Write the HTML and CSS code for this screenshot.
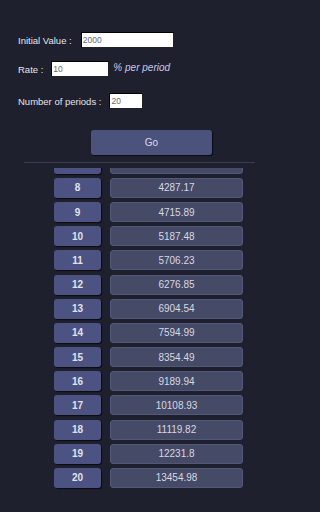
FILE: index.html
```html
<!DOCTYPE html>
<html>
<head>
<meta charset="utf-8">
<link rel="stylesheet" href="styles.css">
</head>
<body>
<div class="form">
  <div class="field f1"><label>Initial Value :</label><input class="in in1" value="2000"></div>
  <div class="field f2"><label>Rate :</label><input class="in in2" value="10"><span class="unit">% per period</span></div>
  <div class="field f3"><label>Number of periods :</label><input class="in in3" value="20"></div>
  <button class="go">Go</button>
</div>
<div class="rule"></div>
<div class="scroller">
  <div class="list">
    <div class="row"><div class="num">7</div><div class="val">3897.43</div></div>
    <div class="row"><div class="num">8</div><div class="val">4287.17</div></div>
    <div class="row"><div class="num">9</div><div class="val">4715.89</div></div>
    <div class="row"><div class="num">10</div><div class="val">5187.48</div></div>
    <div class="row"><div class="num">11</div><div class="val">5706.23</div></div>
    <div class="row"><div class="num">12</div><div class="val">6276.85</div></div>
    <div class="row"><div class="num">13</div><div class="val">6904.54</div></div>
    <div class="row"><div class="num">14</div><div class="val">7594.99</div></div>
    <div class="row"><div class="num">15</div><div class="val">8354.49</div></div>
    <div class="row"><div class="num">16</div><div class="val">9189.94</div></div>
    <div class="row"><div class="num">17</div><div class="val">10108.93</div></div>
    <div class="row"><div class="num">18</div><div class="val">11119.82</div></div>
    <div class="row"><div class="num">19</div><div class="val">12231.8</div></div>
    <div class="row"><div class="num">20</div><div class="val">13454.98</div></div>
  </div>
</div>
</body>
</html>
```
FILE: styles.css
```css
html, body {
  margin: 0;
  padding: 0;
  background: #1f202d;
  height: 512px;
  overflow: hidden;
  font-family: "Liberation Sans", Arial, sans-serif;
}
.form {
  padding: 32px 0 0 18px;
  display: flex;
  flex-direction: column;
}
.field {
  display: flex;
  align-items: center;
  height: 16px;
  color: #e4e4e8;
  font-size: 9.5px;
}
.field label {
  margin-right: 9px;
  white-space: nowrap;
}
.f2 { margin-top: 13px; }
.f3 { margin-top: 16px; }
.in {
  box-sizing: border-box;
  height: 16px;
  background: #fff;
  border: 1px solid #222;
  border-top-color: #000;
  border-left-color: #000;
  padding: 0 1px;
  font-family: "Liberation Sans", Arial, sans-serif;
  font-size: 8.5px;
  color: #6a6a6a;
  outline: none;
}
.in1 { width: 93px; }
.in2 { width: 58px; margin-left: -1px; }
.in3 { width: 34px; margin-left: -1px; }
.unit {
  font-style: italic;
  font-size: 10px;
  color: #c9c9f2;
  margin-left: 4px;
  margin-top: -3px;
  white-space: nowrap;
}
.go {
  margin: 21px 0 0 73px;
  width: 121px;
  height: 25px;
  border: none;
  border-radius: 3px;
  background: #4b527c;
  color: #dcdce4;
  font-family: "Liberation Sans", Arial, sans-serif;
  font-size: 10px;
  box-shadow: 1px 1px 1px #0c0c14;
  padding: 0;
}
.rule {
  margin: 7px 0 0 24px;
  width: 231px;
  height: 1px;
  background: #3a3b4b;
}
.scroller {
  margin-top: 5px;
  height: 344px;
  overflow: hidden;
}
.list {
  margin-top: -14.2px;
  padding-left: 54px;
  display: flex;
  flex-direction: column;
  gap: 4.17px;
}
.row {
  display: flex;
  height: 20px;
}
.num {
  box-sizing: border-box;
  width: 47px;
  height: 20px;
  background: #4c5382;
  border-radius: 3px;
  box-shadow: 1px 1px 1px #0b0b12;
  color: #e2e2ea;
  font-weight: bold;
  font-size: 10px;
  display: flex;
  align-items: center;
  justify-content: center;
}
.val {
  box-sizing: border-box;
  margin-left: 9px;
  width: 133px;
  height: 20px;
  background: #454a66;
  border: 1px solid #53587a;
  border-radius: 3px;
  color: #d8d8e2;
  font-size: 10px;
  display: flex;
  align-items: center;
  justify-content: center;
}
```
